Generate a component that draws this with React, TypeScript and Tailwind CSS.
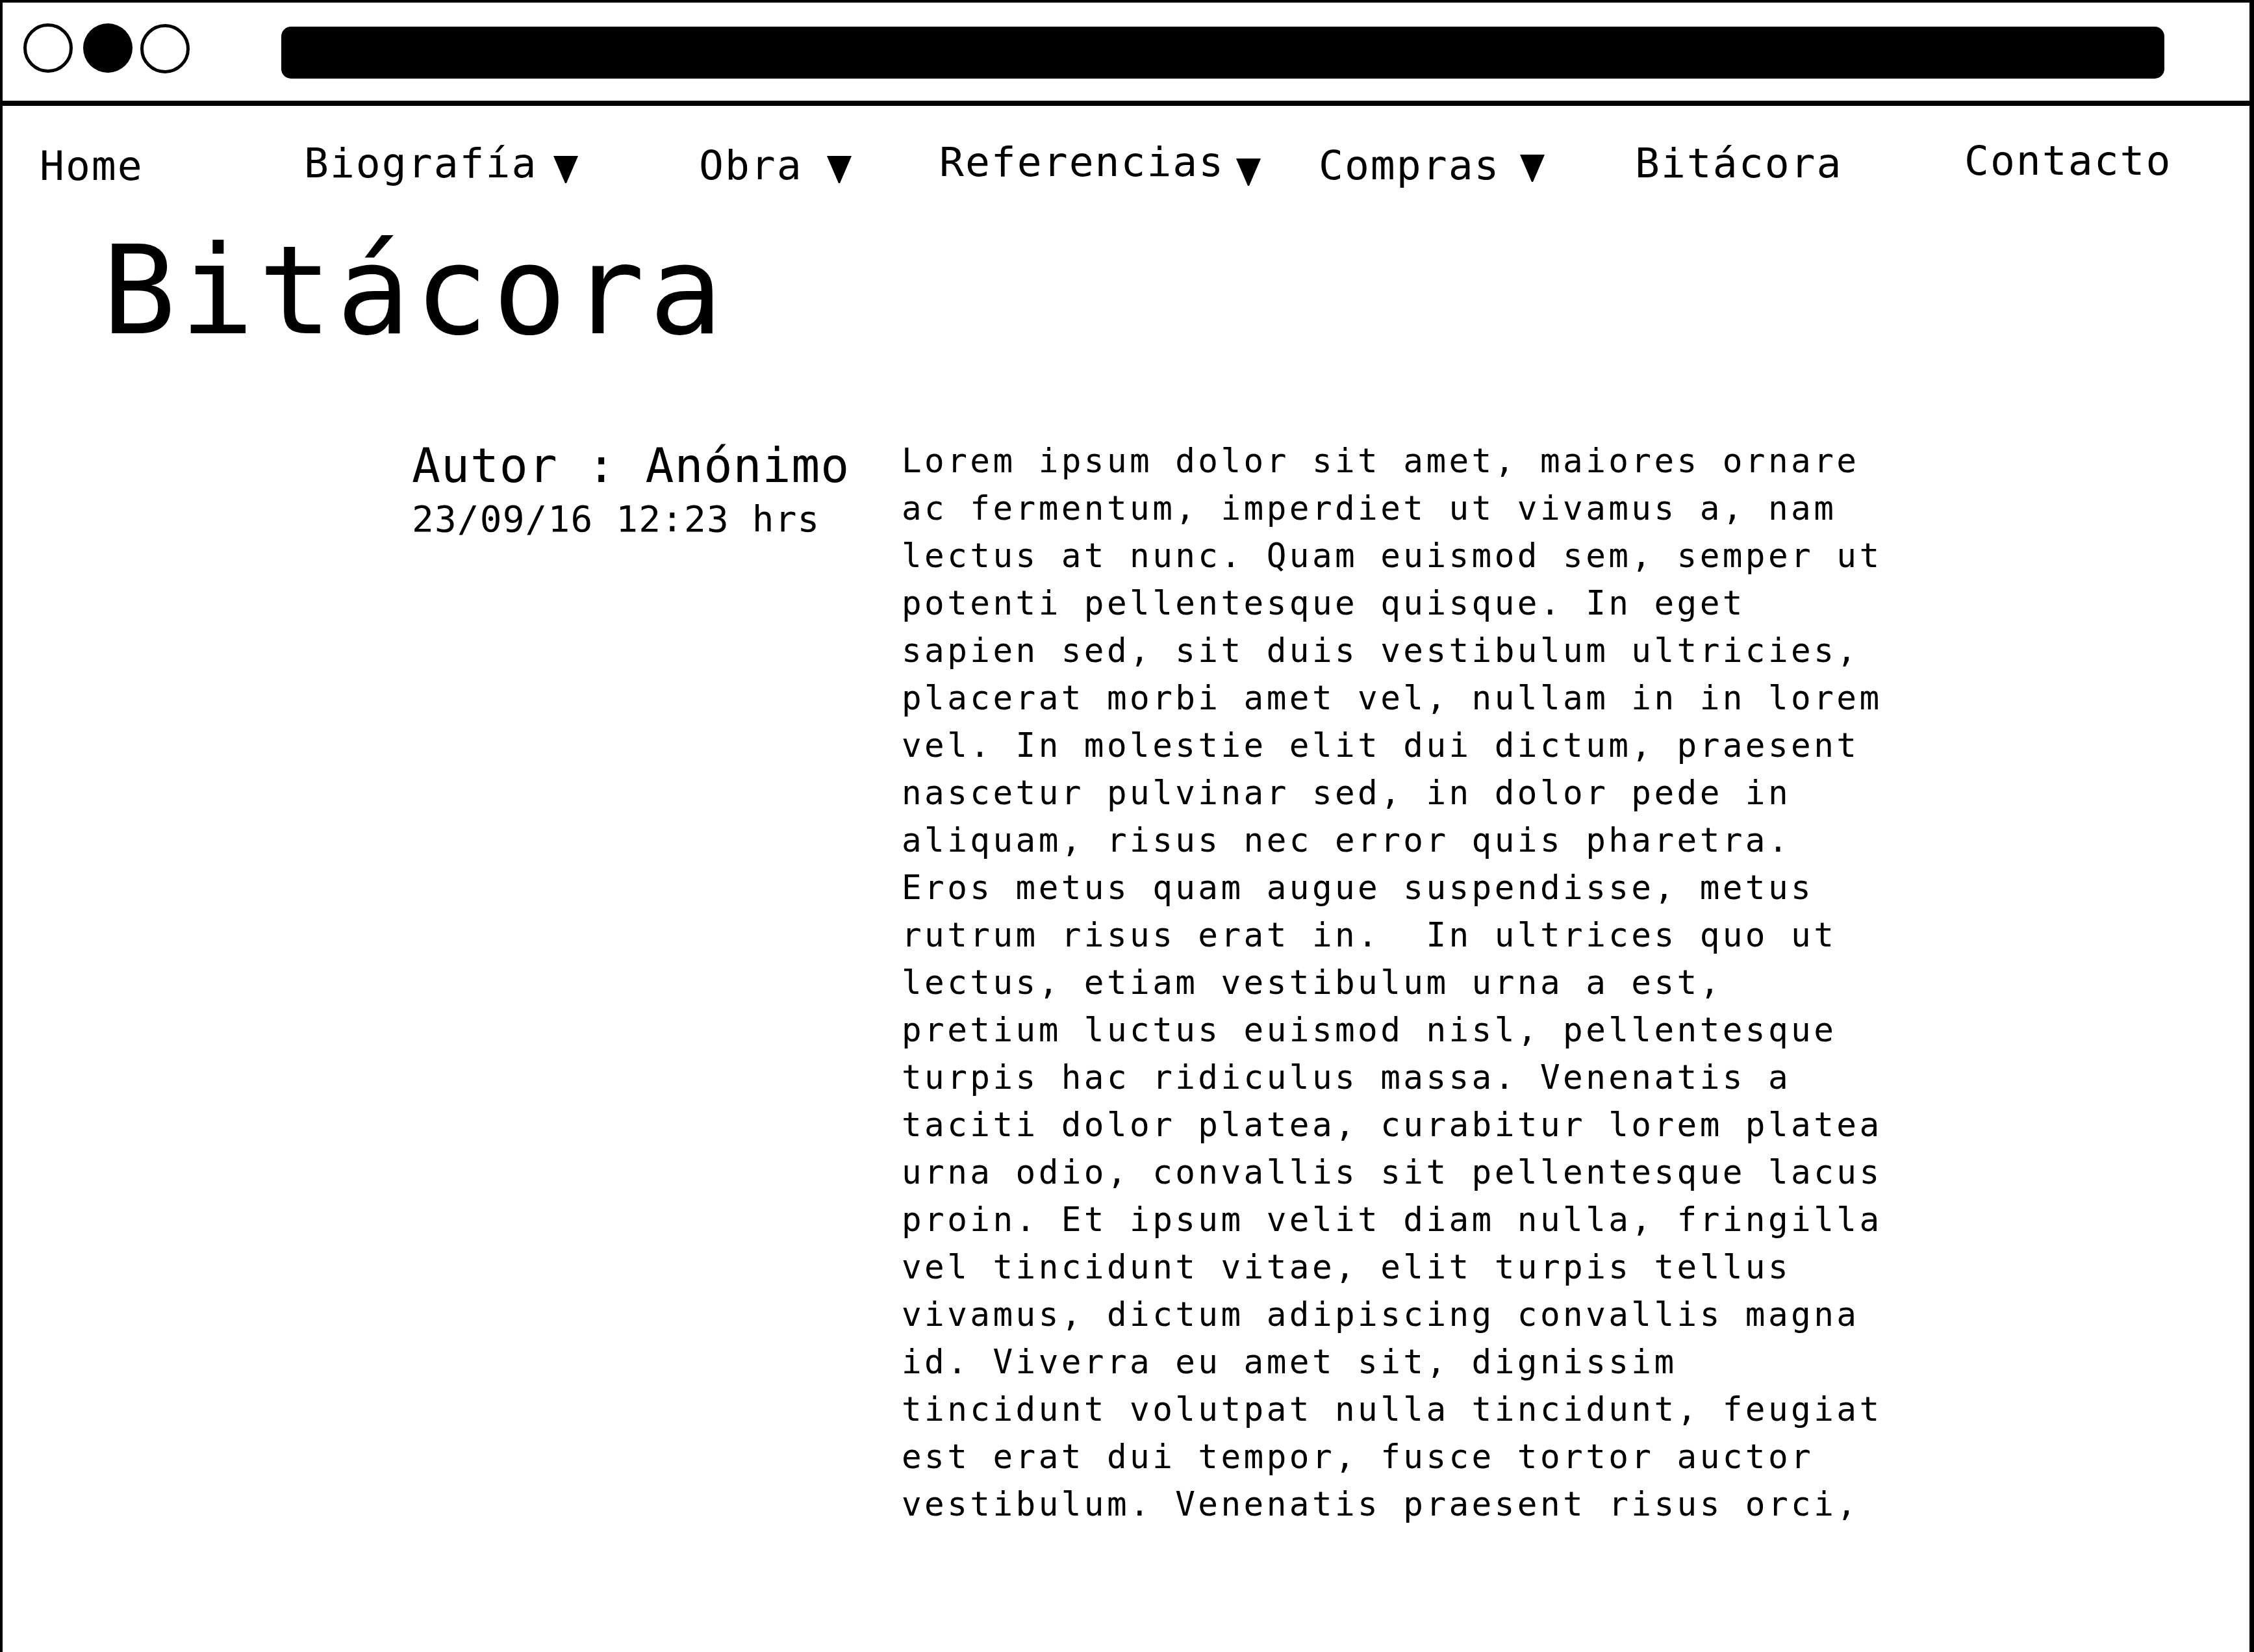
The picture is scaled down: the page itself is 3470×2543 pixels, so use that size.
import React from "react";

const lines = [
  "Lorem ipsum dolor sit amet, maiores ornare",
  "ac fermentum, imperdiet ut vivamus a, nam",
  "lectus at nunc. Quam euismod sem, semper ut",
  "potenti pellentesque quisque. In eget",
  "sapien sed, sit duis vestibulum ultricies,",
  "placerat morbi amet vel, nullam in in lorem",
  "vel. In molestie elit dui dictum, praesent",
  "nascetur pulvinar sed, in dolor pede in",
  "aliquam, risus nec error quis pharetra.",
  "Eros metus quam augue suspendisse, metus",
  "rutrum risus erat in.  In ultrices quo ut",
  "lectus, etiam vestibulum urna a est,",
  "pretium luctus euismod nisl, pellentesque",
  "turpis hac ridiculus massa. Venenatis a",
  "taciti dolor platea, curabitur lorem platea",
  "urna odio, convallis sit pellentesque lacus",
  "proin. Et ipsum velit diam nulla, fringilla",
  "vel tincidunt vitae, elit turpis tellus",
  "vivamus, dictum adipiscing convallis magna",
  "id. Viverra eu amet sit, dignissim",
  "tincidunt volutpat nulla tincidunt, feugiat",
  "est erat dui tempor, fusce tortor auctor",
  "vestibulum. Venenatis praesent risus orci,",
];

function Arrow({ className }: { className?: string }) {
  return (
    <svg width="38" height="42" viewBox="0 0 38 42" className={className}>
      <polygon points="0,0 38,0 20,42 18,42" fill="black" />
    </svg>
  );
}

export default function App() {
  return (
    <div className="min-h-screen bg-white font-['DejaVu_Sans_Mono',monospace] text-black">
      <div className="min-h-[2543px] border-l-4 border-r-[7px] border-t-4 border-black">
        {/* window title bar */}
        <div className="flex items-start h-[159px] border-b-8 border-black pl-[32px]">
          <div className="mt-[32px] w-[76px] h-[76px] rounded-full border-[5px] border-black" />
          <div className="mt-[32px] ml-[16px] w-[76px] h-[76px] rounded-full bg-black" />
          <div className="mt-[33px] ml-[12px] w-[76px] h-[76px] rounded-full border-[5px] border-black" />
          <div className="mt-[37px] ml-[141px] w-[2899px] h-[80px] rounded-[15px] bg-black" />
        </div>

        {/* navigation */}
        <nav className="flex items-start pl-[57px] pt-[53px] text-[63px] leading-none tracking-[2px]">
          <div className="w-[407px] mt-[8px]">Home</div>
          <div className="w-[608px] mt-[4px] flex items-start">
            <span>Biografía</span>
            <Arrow className="ml-[25px] mt-[20px]" />
          </div>
          <div className="w-[370px] mt-[7px] flex items-start">
            <span>Obra</span>
            <Arrow className="ml-[37px] mt-[17px]" />
          </div>
          <div className="w-[584px] mt-[2px] flex items-start">
            <span>Referencias</span>
            <Arrow className="ml-[18px] mt-[26px]" />
          </div>
          <div className="w-[487px] mt-[7px] flex items-start">
            <span>Compras</span>
            <Arrow className="ml-[30px] mt-[15px]" />
          </div>
          <div className="w-[507px] mt-[4px]">Bitácora</div>
          <div className="mt-0">Contacto</div>
        </nav>

        {/* page title */}
        <h1 className="mt-[67px] pl-[153px] text-[189px] leading-none tracking-[6.5px]">Bitácora</h1>

        {/* entry */}
        <div className="flex items-start mt-[130px] pl-[630px]">
          <div className="w-[754px] shrink-0">
            <div className="mt-[7px] text-[73px] leading-none tracking-[1px]">Autor : Anónimo</div>
            <div className="mt-[18px] text-[56px] leading-none tracking-[1.2px]">23/09/16 12:23 hrs</div>
          </div>
          <div className="text-[51px] leading-[73px] tracking-[4.4px]">
            {lines.map((l, i) => (
              <div key={i} className="whitespace-pre">
                {l}
              </div>
            ))}
          </div>
        </div>
      </div>
    </div>
  );
}
